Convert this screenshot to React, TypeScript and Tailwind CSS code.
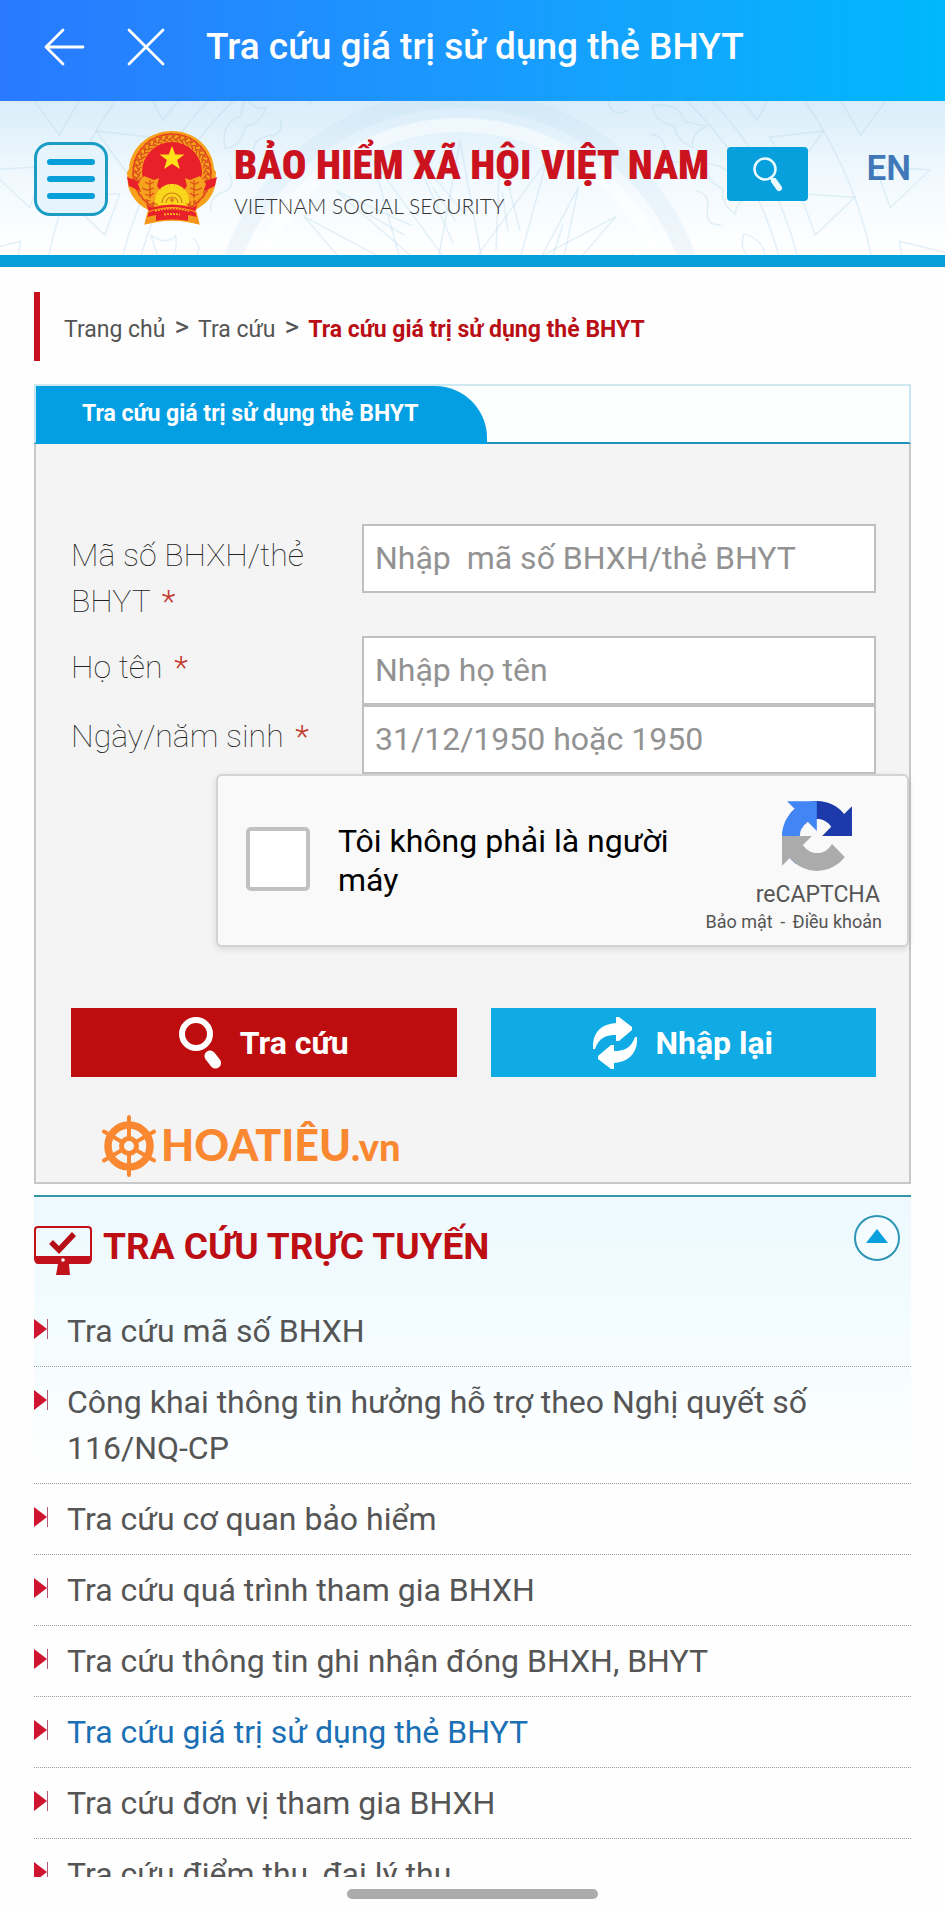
import React from "react";

const menuItems = [
  "Tra cứu mã số BHXH",
  "Công khai thông tin hưởng hỗ trợ theo Nghị quyết số 116/NQ-CP",
  "Tra cứu cơ quan bảo hiểm",
  "Tra cứu quá trình tham gia BHXH",
  "Tra cứu thông tin ghi nhận đóng BHXH, BHYT",
  "Tra cứu giá trị sử dụng thẻ BHYT",
  "Tra cứu đơn vị tham gia BHXH",
  "Tra cứu điểm thu, đại lý thu",
];
const activeItem = 5;

const fields = [
  { id: "code", label: "Mã số BHXH/thẻ BHYT", placeholder: "Nhập  mã số BHXH/thẻ BHYT" },
  { id: "name", label: "Họ tên", placeholder: "Nhập họ tên" },
  { id: "birth", label: "Ngày/năm sinh", placeholder: "31/12/1950 hoặc 1950" },
];

function DrumPattern() {
  const rays = Array.from({ length: 14 }, (_, i) => (i * 360) / 14);
  const birds = Array.from({ length: 24 }, (_, i) => i * 15);
  const spikes = Array.from({ length: 36 }, (_, i) => i * 10);
  return (
    <svg
      className="absolute inset-0 h-full w-full"
      viewBox="0 0 945 155"
      preserveAspectRatio="xMidYMin slice"
      fill="none"
      aria-hidden="true"
    >
      <g stroke="#b5d8ec" strokeOpacity="0.35" strokeWidth="1.5">
        <circle cx="460" cy="240" r="216" stroke="#ffffff" strokeOpacity="0.5" strokeWidth="14" />
        <circle cx="460" cy="240" r="242" strokeWidth="18" strokeOpacity="0.18" />
        <circle cx="460" cy="240" r="330" />
        <circle cx="460" cy="240" r="348" />
        <circle cx="460" cy="240" r="420" />
        {rays.map((a) => (
          <g key={a} transform={`rotate(${a} 460 240)`}>
            <path d="M436 170L460 40L484 170" />
            <path d="M496 150L500 50L520 130M508 130L502 90" />
          </g>
        ))}
        {birds.map((a) => (
          <path
            key={a}
            d="M430 -62q14 -22 34 -12l18 -12q-6 18 6 24q-18 8 -28 -2q-16 12 -30 2M448 -40q10 -10 22 0t20 -4"
            transform={`rotate(${a} 460 240)`}
          />
        ))}
        {spikes.map((a) => (
          <path key={a} d="M438 -130L460 -180L482 -130ZM438 -210L460 -260L482 -210Z" transform={`rotate(${a} 460 240)`} />
        ))}
      </g>
    </svg>
  );
}

function Emblem() {
  const grains = Array.from({ length: 31 }, (_, i) => -150 + i * 10);
  const cogs = Array.from({ length: 11 }, (_, i) => -90 + i * 18);
  return (
    <svg className="h-[96px] w-[92px] shrink-0" viewBox="0 0 92 96" role="img" aria-label="Quốc huy Việt Nam">
      <path
        d="M46 1C22 1 4 19 3 39l-2 3 1 14c3 10 9 17 15 21l7 4-3 13 10-2q15-3 30 0l11 2-4-13 6-4c8-5 13-12 15-21l1-14-2-3C87 19 70 1 46 1Z"
        fill="#f6a21c"
      />
      <circle cx="46" cy="43" r="39" fill="none" stroke="#e9421d" strokeWidth="1.5" />
      {grains.map((a) => (
        <g key={a} transform={`rotate(${a} 46 43)`} stroke="#d9501c" strokeWidth="1.2" fill="none">
          <path d="M44 3l3 3-3 3 3 3M49 5l-2 3 3 3" />
        </g>
      ))}
      <circle cx="46" cy="42" r="30" fill="#e8202a" />
      <path d="M1 47l21 8-2 9-17-8zM91 47l-21 8 2 9 17-8z" fill="#e8202a" />
      <path d="M18 46l10 4 5-2-2 8 3 4-6 12-11-4-5-14zM74 46l-10 4-5-2 2 8-3 4 6 12 11-4 5-14z" fill="#f6a21c" />
      <path
        d="M19 52l4 2 5-2M16 58l5 2 7-2M19 64l5 2 4-3M24 50v18M73 52l-4 2-5-2M76 58l-5 2-7-2M73 64l-5 2-4-3M68 50v18"
        stroke="#d9501c"
        strokeWidth="1.3"
        fill="none"
      />
      <path d="M46 16l3.3 8.500h9.200l-7.300 5.600 2.700 9-7.900-5.300-7.900 5.300 2.700-9-7.300-5.600h9.200Z" fill="#ffe01b" />
      <g fill="#f9d71c">
        <path d="M32 75a14 17 0 0 1 28 0Z" />
        {cogs.map((a) => (
          <rect key={a} x="43.500" y="54" width="5" height="6" transform={`rotate(${a} 46 71)`} />
        ))}
      </g>
      <path d="M36 73a10 10 0 0 1 20 0M40 73a6 6 0 0 1 12 0" fill="none" stroke="#d9801c" strokeWidth="1.200" />
      <circle cx="46" cy="70" r="2" fill="#d9801c" />
      <path d="M20 72q3 7 9 5 17-5 34 0 7 2 9-5l-3 11q-23-9-46 0Z" fill="#e8202a" />
      <path d="M22 82q24-9 48 0l3 12q-27-8-54 0Z" fill="#e8202a" stroke="#f6a21c" strokeWidth="1.200" />
      <path d="M29 81q17-5 34 0M38 84.500q8-1 16 0" fill="none" stroke="#f6b21c" strokeWidth="1.800" strokeDasharray="2 1" />
      <path d="M21 87l9-2v6l-10 3zM71 87l-9-2v6l10 3z" fill="#f39a1c" />
    </svg>
  );
}

function RecaptchaLogo() {
  return (
    <svg className="h-[70px] w-[70px]" viewBox="0 0 64 64" aria-hidden="true">
      <path
        fill="#1c3aa9"
        d="M64 31.955l-.033-1.370V4.687l-7.160 7.160C50.948 4.674 42.033.093 32.050.093c-10.400 0-19.622 4.960-25.458 12.640l11.736 11.860a15.550 15.550 0 0 1 4.754-5.334c2.050-1.600 4.952-2.906 8.968-2.906.485 0 .860.057 1.135.163 4.976.393 9.288 3.140 11.828 7.124l-8.307 8.307L64 31.953"
      />
      <path
        fill="#4285f4"
        d="M31.862.094l-1.370.033H4.594l7.160 7.160C4.580 13.147 0 22.060 0 32.046c0 10.400 4.960 19.622 12.640 25.458L24.500 45.768a15.550 15.550 0 0 1-5.334-4.754c-1.600-2.050-2.906-4.952-2.906-8.968 0-.485.057-.860.163-1.135.393-4.976 3.140-9.288 7.124-11.828l8.307 8.307L31.860.095"
      />
      <path
        fill="#ababab"
        d="M.001 32.045l.033 1.370v25.898l7.160-7.160c5.860 7.173 14.774 11.754 24.760 11.754 10.400 0 19.622-4.960 25.458-12.640l-11.736-11.860a15.550 15.550 0 0 1-4.754 5.334c-2.050 1.600-4.952 2.906-8.968 2.906-.485 0-.860-.057-1.135-.163-4.976-.393-9.288-3.140-11.828-7.124l8.307-8.307c-10.522.040-22.400.066-27.295-.005"
      />
    </svg>
  );
}

function ShipWheel() {
  return (
    <svg className="h-[62px] w-[56px]" viewBox="0 0 56 62" fill="none" stroke="#fa8831" aria-hidden="true">
      <circle cx="28" cy="31" r="21" strokeWidth="7.500" />
      <circle cx="28" cy="31" r="7.500" strokeWidth="5" />
      {[0, 60, 120, 180, 240, 300].map((a) => (
        <g key={a} transform={`rotate(${a} 28 31)`}>
          <path d="M28 23V2" strokeWidth="4" strokeLinecap="round" />
        </g>
      ))}
    </svg>
  );
}

export default function App() {
  return (
    <div className="flex h-screen flex-col overflow-hidden bg-[#fefefe] font-['Roboto','Noto_Sans',sans-serif] text-[#555]">
      <header className="flex h-[101px] shrink-0 items-center bg-linear-to-r from-[#2979ff] to-[#00b8fc] pb-2 pl-[42px] text-white">
        <button type="button" aria-label="Quay lại" className="mr-[38px]">
          <svg className="h-11 w-11" viewBox="0 0 44 44" fill="none" stroke="currentColor" strokeWidth="2.800" strokeLinecap="round" strokeLinejoin="round">
            <path d="M41 22H4M21 5L4 22l17 17" />
          </svg>
        </button>
        <button type="button" aria-label="Đóng" className="mr-[38px]">
          <svg className="h-11 w-11" viewBox="0 0 44 44" fill="none" stroke="currentColor" strokeWidth="2.800" strokeLinecap="round">
            <path d="M5 5l34 34M39 5L5 39" />
          </svg>
        </button>
        <h1 className="text-[37px] leading-[46px] font-medium">Tra cứu giá trị sử dụng thẻ BHYT</h1>
      </header>

      <div className="relative h-[166px] shrink-0 border-b-12 border-[#079fd9] bg-linear-to-b from-[#d9edf9] via-[#f1f9fe] to-white">
        <DrumPattern />
        <div className="relative flex h-full items-start px-[34px] pt-[27px]">
          <button
            type="button"
            aria-label="Menu"
            className="mt-[14px] flex h-[74px] w-[74px] shrink-0 items-center justify-center rounded-[16px] border-3 border-[#1a9cc4] bg-[#e6f4fd]"
          >
            <svg className="h-[40px] w-12" viewBox="0 0 48 40" fill="none" stroke="#079fd9" strokeWidth="6" strokeLinecap="round">
              <path d="M3 3h42M3 20h42M3 37h42" />
            </svg>
          </button>
          <div className="ml-[18px] flex pt-[2px]">
            <Emblem />
          </div>
          <div className="ml-4 w-[474px] pt-3 whitespace-nowrap">
            <p className="font-['Roboto_Condensed','Liberation_Sans_Narrow','Roboto',sans-serif] text-[41px] leading-[50px] font-black text-[#cb131f]">
              BẢO HIỂM XÃ HỘI VIỆT NAM
            </p>
            <p className="font-['Lato',sans-serif] text-[21px] leading-8 font-light text-[#333]">
              VIETNAM SOCIAL SECURITY
            </p>
          </div>
          <button
            type="button"
            aria-label="Tìm kiếm"
            className="mt-[19px] ml-[19px] flex h-[54px] w-[81px] shrink-0 items-center justify-center rounded-[4px] bg-[#079fdc]"
          >
            <svg className="h-9 w-8" viewBox="0 0 32 36" fill="none" stroke="#e9fbff" strokeLinecap="round">
              <circle cx="13" cy="13" r="10.500" strokeWidth="2.500" />
              <path d="M19 22l3 3" strokeWidth="3" />
              <path d="M22 25l5 7" strokeWidth="6" />
            </svg>
          </button>
          <a href="#en" className="mt-[21px] ml-auto text-[35px] leading-10 font-semibold text-[#3f77b8]">
            EN
          </a>
        </div>
      </div>

      <main className="min-h-0 flex-1 overflow-hidden px-[34px] pt-[25px]">
        <nav className="flex h-[69px] items-center gap-[9px] border-l-6 border-[#c8101e] pt-[6px] pl-6 text-[23px] leading-7">
          <a href="#home">Trang chủ</a>
          <span className="pb-[6px] text-[28px]">&gt;</span>
          <a href="#lookup">Tra cứu</a>
          <span className="pb-[6px] text-[28px]">&gt;</span>
          <a href="#current" className="font-bold text-[#b90e16]">
            Tra cứu giá trị sử dụng thẻ BHYT
          </a>
        </nav>

        <div className="mt-[23px] flex h-[60px] border-2 border-x-[#c5e6f2] border-t-[#cfe9f0] border-b-[#2391bd] bg-[#fdffff]">
          <h2 className="flex h-[58px] items-center rounded-tr-[52px] bg-[#049ee3] pr-[68px] pb-[3px] pl-[46px] text-[23px] leading-7 font-bold text-white">
            Tra cứu giá trị sử dụng thẻ BHYT
          </h2>
        </div>

        <form
          className="border-x-2 border-b-2 border-[#c6c8ca] bg-[#f4f4f4] pt-20 pb-[5px]"
          onSubmit={(e) => e.preventDefault()}
        >
          <div className="grid grid-cols-[291px_1fr] pr-[33px] pl-[35px] text-[32px] leading-[46px]">
            {fields.map((f, i) => (
              <React.Fragment key={f.id}>
                <label htmlFor={f.id} className="pt-2 pr-10 font-thin text-[#222]">
                  {f.label} <span className="pl-1 font-light text-[#c0392b]">*</span>
                </label>
                <div className={i === 0 ? "h-28" : "h-[69px]"}>
                  <input
                    id={f.id}
                    type="text"
                    placeholder={f.placeholder}
                    className="h-[69px] w-full border-2 border-[#c0c0c0] bg-white px-[11px] pb-[2px] text-[32px] text-[#555] placeholder:text-[#929292]"
                  />
                </div>
              </React.Fragment>
            ))}
          </div>

          <div className="ml-[180px] flex h-[173px] rounded-[6px] border-2 border-[#d3d3d3] bg-[#f9f9f9] pr-[25px] pl-7 shadow-[0_2px_6px_rgba(0,0,0,0.12)]">
            <input
              id="robot"
              type="checkbox"
              className="mt-[51px] h-16 w-16 shrink-0 appearance-none rounded-[5px] border-4 border-[#c1c1c1] bg-white"
            />
            <label htmlFor="robot" className="mt-[46px] ml-7 w-[350px] text-[32px] leading-[39px] text-black">
              Tôi không phải là người máy
            </label>
            <div className="ml-auto flex flex-col items-end pt-[25px] whitespace-nowrap">
              <div className="mr-[30px]">
                <RecaptchaLogo />
              </div>
              <p className="mt-2 mr-[2px] text-[23px] leading-8">reCAPTCHA</p>
              <p className="text-[18px] leading-[22px]">
                <a href="#privacy">Bảo mật</a> <span className="mx-[3px]">-</span> <a href="#terms">Điều khoản</a>
              </p>
            </div>
          </div>

          <div className="mt-[61px] grid grid-cols-2 gap-[34px] pr-[33px] pl-[35px] text-[32px] leading-[46px] font-bold text-white">
            <button type="submit" className="flex h-[69px] items-center justify-center gap-[18px] bg-[#be0d0f]">
              <svg className="h-[52px] w-[43px]" viewBox="0 0 43 52" fill="none" stroke="currentColor" strokeLinecap="round">
                <circle cx="17" cy="17" r="14" strokeWidth="6" />
                <path d="M31 39l5.500 7" strokeWidth="11" />
              </svg>
              Tra cứu
            </button>
            <button type="reset" className="flex h-[69px] items-center justify-center gap-[18px] bg-[#10abe5]">
              <svg className="h-[52px] w-11" viewBox="0 0 44 52" fill="currentColor">
                <path d="M0 32C-1 17 7 7 23 6V0h3l13 10v3L26 24h-3v-6C14 18 6 20 2 32ZM44 20c1 15-7 25-23 26v6h-3L5 42v-3l13-11h3v6c9 0 17-2 21-14Z" />
              </svg>
              Nhập lại
            </button>
          </div>

          <div className="mt-[37px] flex items-center pl-[65px] text-[#fa8831]">
            <ShipWheel />
            <p className="ml-1 font-['Lato',sans-serif] text-[43px] leading-[62px] font-black">
              HOATIÊU<span className="text-[38px]">.vn</span>
            </p>
          </div>
        </form>

        <section className="mt-[11px] border-t-2 border-[#3296a5] bg-[linear-gradient(180deg,#edf9ff_0px,#f3fcff_120px,#fbfeff_240px,#fefefe_290px)]">
          <div className="flex h-[99px] items-start">
            <svg className="mt-[29px] h-[50px] w-[58px]" viewBox="0 0 58 50" fill="none" aria-hidden="true">
              <rect x="1" y="1" width="56" height="35" rx="3" stroke="#c1121c" strokeWidth="2" />
              <path d="M1 30h56v5q0 3-3 3H4q-3 0-3-3ZM24 38h11l1 11H22Z" fill="#c1121c" />
              <circle cx="29" cy="34" r="1.800" fill="#fff" />
              <path d="M17 16l8 8L40 8" stroke="#b50e16" strokeWidth="5.500" />
            </svg>
            <h2 className="mt-[27px] ml-[11px] text-[37px] leading-[46px] font-bold text-[#bd0e14]">TRA CỨU TRỰC TUYẾN</h2>
            <button
              type="button"
              aria-label="Thu gọn"
              className="mt-[18px] mr-[11px] ml-auto flex h-[46px] w-[46px] items-center justify-center rounded-full border-2 border-[#2e96b4] bg-[#f4fcff]"
            >
              <svg className="mb-1 h-[14px] w-[22px]" viewBox="0 0 22 14" fill="#079fdc">
                <path d="M11 0l11 14H0Z" />
              </svg>
            </button>
          </div>
          <ul>
            {menuItems.map((item, i) => (
              <li key={item} className="flex items-start border-b border-dotted border-[#9c9c9c] py-3">
                <svg className="mt-[11px] mr-[19px] h-5 w-[14px] shrink-0" viewBox="0 0 14 20" aria-hidden="true">
                  <path d="M0 0l13 10L0 20Z" fill="#cf1430" />
                  <path d="M13.500 0v20" stroke="#b05a78" />
                </svg>
                <a
                  href={`#item-${i}`}
                  className={i === activeItem ? "pr-20 text-[32px] leading-[46px] text-[#1b6fb5]" : "pr-20 text-[32px] leading-[46px] text-[#555]"}
                >
                  {item}
                </a>
              </li>
            ))}
          </ul>
        </section>
      </main>

      <footer className="flex h-[34px] shrink-0 items-start justify-center pt-3">
        <div className="h-[10px] w-[251px] rounded-full bg-[#acacac]" />
      </footer>
    </div>
  );
}
